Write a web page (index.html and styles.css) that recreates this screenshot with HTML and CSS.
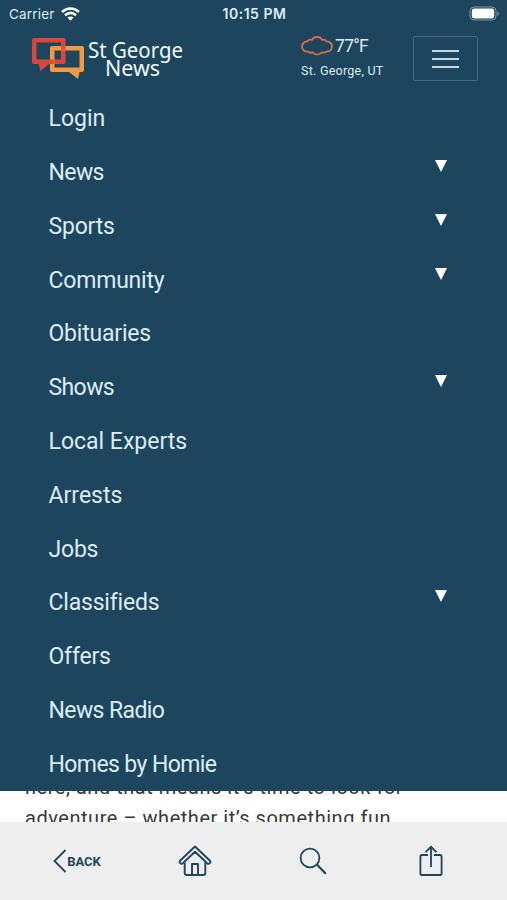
FILE: index.html
```html
<!DOCTYPE html>
<html lang="en">

<head>
  <meta charset="UTF-8">
  <meta name="viewport" content="width=device-width, initial-scale=1.0">
  <title>St George News</title>
  <link rel="stylesheet" href="styles.css">
</head>

<body>
  <div class="status-bar">
    <div class="carrier">
      <span>Carrier</span>
      <svg width="19" height="14" viewBox="0 0 19 14" fill="none" stroke="#fff" stroke-width="2.5">
        <path d="M1 5C6 .2 13 .2 18 5" />
        <path d="M4 8.300c3.400-3 7.600-3 11 0" />
        <path d="M6.400 10.600c1.900-1.600 4.300-1.600 6.200 0L9.500 13.800z" fill="#fff" stroke="none" />
      </svg>
    </div>
    <div class="time">10:15 PM</div>
    <svg class="battery" width="31" height="15" viewBox="0 0 31 15">
      <rect x="1" y="1" width="26" height="13" rx="4" fill="none" stroke="#8296a3" />
      <rect x="2.8" y="2.6" width="22.4" height="9.8" rx="2.4" fill="#fff" />
      <path d="M28.5 5.2c1.800.8 1.800 3.800 0 4.600z" fill="#8296a3" />
    </svg>
  </div>

  <header class="header">
    <a href="#" class="logo">
      <svg width="154" height="44" viewBox="0 0 154 44">
        <path d="M3 2h29.500q2 0 2 2v22q0 2-2 2H18l-8.500 7L7.500 28H3q-2 0-2-2V4q0-2 2-2zM5.500 6.500v17h24.500v-17z" fill="#d9463c" fill-rule="evenodd" />
        <path d="M21 10h30q2 0 2 2v22q0 2-2 2h-2.500l-1.500 7-9-7H21q-2 0-2-2V12q0-2 2-2zM23.500 14.500v17h25v-17z" fill="#f19a45" fill-rule="evenodd" />
        <path d="M19 23.500h4.500V28H19zM30 10h4.500v4.500H30z" fill="#dd5236" />
        <text x="57" y="21.500" class="logo-text" textLength="95" lengthAdjust="spacingAndGlyphs">St George</text>
        <text x="74" y="39.500" class="logo-text" textLength="55" lengthAdjust="spacingAndGlyphs">News</text>
      </svg>
    </a>
    <div class="weather">
      <div class="temp">
        <svg width="32" height="20" viewBox="0 0 32 20" fill="none" stroke="#dc7046" stroke-width="1.800">
          <path d="M7 15.600C3.500 16 1 13.600 1 10.500S3.500 5.200 6.500 5.400C7.500 3.800 9.200 3.400 10.800 3.900 12 1.900 13.800 1 16 1s4 .9 5.200 2.900c1.600-.5 3.300-.1 4.300 1.500 3-.2 5.500 2 5.500 5.100s-2.500 5.500-6 5.100c-1.300 1.200-3 1.400-4.400.7C19.400 17.800 17.800 18.600 16 18.600s-3.400-.8-4.600-2.300c-1.400.7-3.100.5-4.400-.7z" />
        </svg>
        <span>77°F</span>
      </div>
      <div class="city">St. George, UT</div>
    </div>
    <button class="toggle" aria-label="Menu">
      <span class="line"></span>
      <span class="line"></span>
      <span class="line"></span>
    </button>
  </header>

  <nav class="menu">
    <a href="#" class="wide">Login</a>
    <a href="#" class="dropdown tight">News</a>
    <a href="#" class="dropdown">Sports</a>
    <a href="#" class="dropdown">Community</a>
    <a href="#">Obituaries</a>
    <a href="#" class="dropdown tight">Shows</a>
    <a href="#" class="wide">Local Experts</a>
    <a href="#" class="wide">Arrests</a>
    <a href="#">Jobs</a>
    <a href="#" class="dropdown">Classifieds</a>
    <a href="#">Offers</a>
    <a href="#" class="tight">News Radio</a>
    <a href="#" class="tight">Homes by Homie</a>
  </nav>

  <main class="article">
    <p>here, and that means it’s time to look for<br>adventure – whether it’s something fun</p>
  </main>

  <footer class="toolbar">
    <a href="#" class="back">
      <svg width="14" height="26" viewBox="0 0 14 26" fill="none" stroke="#1d455d" stroke-width="1.800">
        <path d="M12.500 2L1.500 13l11 11" />
      </svg>
      <span>BACK</span>
    </a>
    <a href="#" aria-label="Home">
      <svg width="34" height="34" viewBox="0 0 34 34" fill="none" stroke="#1d455d" stroke-width="1.900" stroke-linejoin="round">
        <path d="M17 2.500L2 16.800c-1.200 1.500 1 4 2.800 2.400L17 7.800l12.200 11.400c1.800 1.600 4-.9 2.800-2.400z" />
        <path d="M6.700 18.500V29q0 2 2 2h16.600q2 0 2-2V18.500" />
        <path d="M14 31V20h6v11" />
      </svg>
    </a>
    <a href="#" aria-label="Search">
      <svg width="30" height="30" viewBox="0 0 30 30" fill="none" stroke="#1d455d" stroke-width="1.800">
        <circle cx="12" cy="12" r="9.400" />
        <path d="M18.800 18.600l9 9.200" stroke-width="2.200" />
      </svg>
    </a>
    <a href="#" aria-label="Share">
      <svg width="26" height="34" viewBox="0 0 26 34" fill="none" stroke="#1d455d" stroke-width="1.800">
        <path d="M10 11H4q-1.600 0-1.600 1.600v16.800Q2.400 31 4 31h18q1.600 0 1.600-1.600V12.600Q23.600 11 22 11h-6" />
        <path d="M13 23V3M7.500 8.200L13 2.800l5.500 5.400" />
      </svg>
    </a>
  </footer>
</body>

</html>
```
FILE: styles.css
```css
* {
  box-sizing: border-box;
}

body {
  margin: 0;
  height: 900px;
  display: flex;
  flex-direction: column;
  overflow: hidden;
  background: #1d455d;
  color: #dcecf7;
  font-family: Roboto, "Liberation Sans", sans-serif;
}

a {
  color: inherit;
  text-decoration: none;
}

svg {
  display: block;
}

.status-bar {
  display: grid;
  grid-template-columns: 1fr auto 1fr;
  align-items: center;
  height: 27px;
  padding: 0 7px 0 9px;
  font-family: Inter, sans-serif;
  font-size: 13.5px;
}

.carrier {
  display: flex;
  align-items: center;
  gap: 6px;
  letter-spacing: 0.2px;
}

.time {
  font-size: 14px;
  font-weight: 600;
  letter-spacing: 0.5px;
}

.battery {
  justify-self: end;
}

.header {
  display: flex;
  align-items: flex-start;
  height: 65px;
  padding: 9px 29px 0 31px;
}

.logo {
  width: 270px;
}

.logo-text {
  font-family: "Noto Sans", sans-serif;
  font-size: 21.5px;
  fill: #f2f8fc;
}

.weather {
  width: 112px;
}

.temp {
  display: flex;
  align-items: center;
  gap: 2px;
  height: 19px;
  font-size: 17.5px;
  letter-spacing: -0.7px;
}

.city {
  margin-top: 8px;
  font-size: 12.5px;
  line-height: 16px;
  letter-spacing: 0.25px;
}

.toggle {
  display: flex;
  flex-direction: column;
  align-items: center;
  justify-content: center;
  gap: 6px;
  width: 65px;
  height: 45px;
  padding: 0;
  border: 1px solid #486b7f;
  border-radius: 2px;
  background: none;
}

.line {
  width: 27px;
  height: 2px;
  background: #c6d8e5;
}

.menu a {
  display: flex;
  align-items: center;
  justify-content: space-between;
  height: 53.77px;
  padding: 0 60px 0 48.5px;
  font-size: 23px;
  letter-spacing: -0.2px;
}

.menu .tight {
  letter-spacing: -0.6px;
}

.menu .wide {
  letter-spacing: 0;
}

.dropdown::after {
  content: "";
  margin-bottom: 13px;
  border: 6.5px solid transparent;
  border-top: 12px solid #fff;
  border-bottom: 0;
}

.article {
  height: 31px;
  overflow: hidden;
  background: #fff;
  color: #383838;
}

.article p {
  margin: -19px 25px 0;
  font-size: 20px;
  line-height: 31px;
  letter-spacing: 0.53px;
  white-space: nowrap;
}

.toolbar {
  display: grid;
  grid-template-columns: repeat(4, 118px);
  align-items: center;
  justify-items: center;
  flex: 1;
  padding: 1px 0 0 18px;
  background: #eee;
  color: #1d455d;
}

.back {
  display: flex;
  align-items: center;
  font-size: 13px;
  font-weight: 700;
}
```
